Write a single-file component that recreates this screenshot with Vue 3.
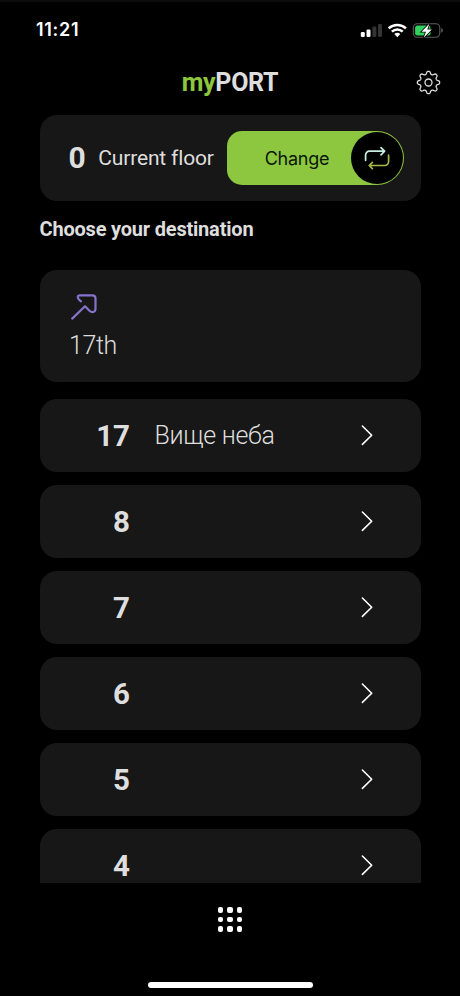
<script setup>
const floors = [
  { number: 17, name: 'Вище неба' },
  { number: 8 },
  { number: 7 },
  { number: 6 },
  { number: 5 },
  { number: 4 },
]

// Eight-toothed gear outline, sampled in polar coordinates
const gearPath = Array.from({ length: 160 }, (_, i) => {
  const a = (i / 160) * Math.PI * 2
  const r = 9.8 + 1.5 * Math.tanh(1.5 * Math.cos(8 * a))
  return `${i ? 'L' : 'M'}${(12.5 + r * Math.sin(a)).toFixed(2)} ${(12.5 - r * Math.cos(a)).toFixed(2)}`
}).join('') + 'Z'
</script>

<template>
  <div class="screen">
    <div class="status">
      <span class="time">11:21</span>
      <svg class="indicators" width="84" height="18" viewBox="0 0 84 18">
        <rect x="0.8" y="10" width="4" height="5" rx="1.2" fill="#fff" />
        <rect x="6.5" y="7.5" width="4" height="7.5" rx="1.2" fill="#fff" />
        <rect x="12.4" y="4.5" width="4" height="10.5" rx="1.2" fill="#343434" />
        <rect x="18" y="2" width="4" height="13" rx="1.2" fill="#343434" />
        <g fill="none" stroke="#fff" stroke-width="2.5">
          <path d="M28.7 6.4a12.5 12.5 0 0 1 17.2 0" />
          <path d="M31.9 9.7a7.8 7.8 0 0 1 10.8 0" />
        </g>
        <path d="M34.3 12.1a4.3 4.3 0 0 1 6 0L37.3 15.2Z" fill="#fff" />
        <rect x="53.3" y="1.7" width="26.5" height="13.6" rx="4" fill="none" stroke="#5b5b5b" stroke-width="1.1" />
        <path d="M81.3 6.3c2 .7 2 3.7 0 4.4z" fill="#6a6a6a" />
        <rect x="55.1" y="3.6" width="15.5" height="9.9" rx="2.3" fill="#32d15d" />
        <path d="M69.3 1.8L61.5 9.7h4.5L63.7 15.7 71.8 7.5h-4.5z" fill="#fff" stroke="#000" stroke-width="1.6" paint-order="stroke" />
      </svg>
    </div>

    <header class="header">
      <h1 class="brand"><span>my</span>PORT</h1>
      <svg class="gear" width="25" height="25" viewBox="0 0 25 25" fill="none" stroke="#dedede" stroke-width="1.3" stroke-linejoin="round">
        <path :d="gearPath" />
        <circle cx="12.5" cy="12.5" r="3.5" />
      </svg>
    </header>

    <section class="current">
      <b class="current-number">0</b>
      <span class="current-label">Current floor</span>
      <button class="change">
        <span class="change-label">Change</span>
        <span class="change-icon">
          <svg width="28" height="26" viewBox="0 0 28 26" fill="none" stroke-width="1.7" stroke-linecap="round" stroke-linejoin="round">
            <path d="M2.6 15.3V10a3.8 3.8 0 0 1 3.8-3.8H21M18 2.6l3.6 3.6-3.6 3.6" stroke="#c9f0e4" />
            <path d="M25.6 10.2v6.3a4 4 0 0 1-4 4H6.7M9.4 17.3L6.2 20.5l3.2 3.2" stroke="#a6b84a" />
          </svg>
        </span>
      </button>
    </section>

    <h2 class="heading">Choose your destination</h2>

    <section class="recent">
      <svg class="recent-icon" width="28" height="28" viewBox="0 0 28 28" fill="none" stroke="#8674cc" stroke-width="2.2" stroke-linecap="round" stroke-linejoin="round">
        <path d="M2.2 26.6L15 14.2 19.500 18.700Q21.500 20.500 23.400 20Q25.500 19.300 25.500 16.800V6.500Q25.500 3.300 22.300 3.300H10Q7.600 3.300 7.800 5.300Q8 7 11 9.300" />
      </svg>
      <span class="recent-label">17th</span>
    </section>

    <main class="list">
      <div v-for="floor in floors" :key="floor.number" class="row">
        <b class="row-number">{{ floor.number }}</b>
        <span class="row-name">{{ floor.name }}</span>
        <svg class="chevron" width="14" height="22" viewBox="0 0 14 22" fill="none" stroke="#fff" stroke-width="1.6" stroke-linecap="round" stroke-linejoin="round">
          <path d="M2.4 2L11.7 11.200 2.400 20.400" />
        </svg>
      </div>
    </main>

    <nav class="nav">
      <div class="dots"><i v-for="n in 9" :key="n" /></div>
    </nav>
    <div class="home-indicator" />
  </div>
</template>

<style>
body {
  background: #000;
}
</style>

<style scoped>
.screen {
  display: flex;
  flex-direction: column;
  width: 460px;
  height: 996px;
  overflow: hidden;
  box-sizing: border-box;
  border-top: 2px solid #0b0b0b;
  background: #000;
  color: #dedede;
  font-family: Roboto, sans-serif;
}
.status {
  display: flex;
  flex: none;
  justify-content: space-between;
  height: 62px;
  padding: 19px 16px 0 36px;
  box-sizing: border-box;
}
.time {
  color: #fff;
  font: 600 18px/18px Inter, sans-serif;
  letter-spacing: 0.7px;
}
.indicators {
  margin-top: 1px;
}
.header {
  display: grid;
  grid-template-columns: 1fr auto 1fr;
  align-items: center;
  flex: none;
  height: 37px;
  padding-right: 19px;
  padding-left: 19px;
}
.brand {
  grid-column: 2;
  margin: 0;
  font-size: 25px;
  font-weight: 700;
  line-height: 30px;
  letter-spacing: -0.3px;
}
.brand span {
  color: #8dc63f;
}
.gear {
  justify-self: end;
}
.current {
  display: flex;
  flex: none;
  align-items: center;
  height: 86px;
  margin: 14px 39px 0 39.5px;
  padding: 0 17px 0 29px;
  box-sizing: border-box;
  border-radius: 17px;
  background: #171717;
}
.current-number {
  font-size: 30px;
  line-height: 36px;
}
.current-label {
  margin-left: 12.5px;
  font-size: 21px;
  letter-spacing: -0.15px;
  white-space: nowrap;
}
.change {
  display: flex;
  align-items: center;
  width: 177px;
  height: 54px;
  margin-left: auto;
  padding: 0;
  border: 0;
  border-radius: 15px 27px 27px 15px;
  background: #8dc63f;
  color: #08180a;
}
.change-label {
  flex: 1;
  padding: 2px 0 0 16px;
  font: 400 18px/22px Inter, sans-serif;
  letter-spacing: -0.25px;
}
.change-icon {
  display: flex;
  align-items: center;
  justify-content: center;
  width: 52px;
  height: 52px;
  margin-right: 1px;
  border-radius: 50%;
  background: #000;
}
.heading {
  flex: none;
  margin: 16px 0 0 39.5px;
  font-size: 20px;
  font-weight: 700;
  line-height: 24px;
  letter-spacing: -0.2px;
}
.recent {
  display: flex;
  flex: none;
  flex-direction: column;
  height: 112px;
  margin: 29px 39px 0 39.5px;
  padding: 22px 30px 0;
  box-sizing: border-box;
  border-radius: 17px;
  background: #171717;
}
.recent-icon {
  flex: none;
}
.recent-label {
  margin: 10px 0 0 -0.5px;
  font-size: 25px;
  font-weight: 300;
  line-height: 32px;
  letter-spacing: -0.4px;
}
.list {
  display: flex;
  flex: none;
  flex-direction: column;
  gap: 13px;
  height: 484px;
  margin: 17px 39px 0 39.5px;
  overflow: hidden;
}
.row {
  display: flex;
  flex: none;
  align-items: center;
  height: 73px;
  padding-right: 47px;
  border-radius: 17px;
  background: #171717;
}
.row-number {
  width: 90.5px;
  font-size: 29.5px;
  text-align: right;
}
.row-name {
  flex: 1;
  margin-left: 24.5px;
  font-size: 25px;
  font-weight: 300;
  letter-spacing: -0.3px;
}
.chevron {
  margin-bottom: 1px;
}
.nav {
  display: flex;
  flex: none;
  justify-content: center;
  padding-top: 24px;
}
.dots {
  display: grid;
  grid-template-columns: repeat(3, 5.5px);
  gap: 4px;
}
.dots i {
  height: 5.5px;
  border-radius: 2px;
  background: #fff;
}
.home-indicator {
  flex: none;
  align-self: center;
  width: 165px;
  height: 6px;
  margin-top: 50px;
  border-radius: 3px;
  background: #fff;
}
</style>
